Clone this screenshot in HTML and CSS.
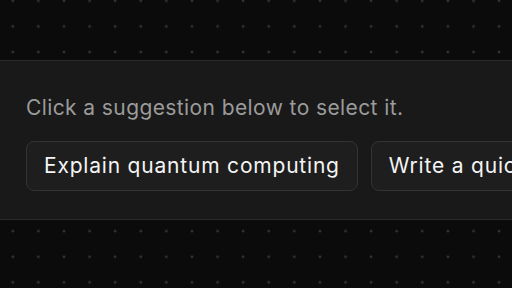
FILE: index.html
```html
<!DOCTYPE html>
<html lang="en">
<head>
    <meta charset="UTF-8">
    <meta name="viewport" content="width=device-width, initial-scale=1.0">
    <title>Suggestions</title>
    <link rel="stylesheet" href="styles.css">
</head>
<body>
    <div class="suggest-panel">
        <p class="suggest-hint">Click a suggestion below to select it.</p>
        <div class="suggest-row">
            <button class="suggest-button">Explain quantum computing</button>
            <button class="suggest-button">Write a quick poem about the sea</button>
            <button class="suggest-button">Plan a weekend trip</button>
        </div>
    </div>
</body>
</html>
```

FILE: styles.css
```css
* {
    margin: 0;
    padding: 0;
    box-sizing: border-box;
    font-family: Inter, "Noto Sans", sans-serif;
}

body {
    background-color: #0b0b0b;
    background-image: radial-gradient(circle, #343434 1.1px, transparent 1.7px);
    background-size: 25.6px 25.6px;
    background-position: 0 -12px;
    height: 100vh;
    overflow: hidden;
    padding-top: 60px;
}

.suggest-panel {
    background-color: #191919;
    border-top: 1px solid #2b2b2b;
    border-bottom: 1px solid #2b2b2b;
    height: 160px;
    padding: 34px 0 0 26px;
    overflow: hidden;
}

.suggest-hint {
    color: #9b9b9b;
    font-size: 21px;
    letter-spacing: 0.4px;
    line-height: 26px;
    margin-bottom: 20px;
}

.suggest-row {
    display: flex;
    gap: 13px;
    white-space: nowrap;
}

.suggest-button {
    flex-shrink: 0;
    background-color: #1e1e1e;
    border: 1px solid #333333;
    border-radius: 8px;
    color: #f4f4f4;
    font-size: 21px;
    letter-spacing: 0.8px;
    line-height: 24px;
    padding: 12px 17px;
    cursor: pointer;
}
```
